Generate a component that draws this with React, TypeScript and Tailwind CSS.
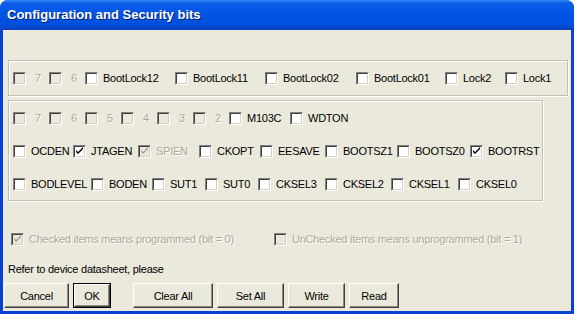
import React from "react";

type It = { t: string; w: string; c?: boolean; d?: boolean; digit?: boolean };

function Box({ c, d }: { c?: boolean; d?: boolean }) {
  return (
    <span className="relative block w-[13px] h-[13px] shrink-0 border border-t-[#808080] border-l-[#808080] border-r-white border-b-white">
      <span
        className={
          d
            ? "absolute inset-0 border border-t-[#404040] border-l-[#404040] border-r-[#d4d0c8] border-b-[#d4d0c8]"
            : "absolute inset-0 border border-t-[#404040] border-l-[#404040] border-r-[#d4d0c8] border-b-[#d4d0c8] bg-white"
        }
      >
        {c && (
          <svg width="9" height="9" viewBox="0 0 9 9" className="absolute left-0 top-0">
            <path d="M1 3 L1 5 L3 7 L8 2 L8 0 L3 5 Z" fill={d ? "#a0a0a0" : "#000"} />
          </svg>
        )}
      </span>
    </span>
  );
}

function Item({ it }: { it: It }) {
  return (
    <div className={`flex items-center h-[13px] shrink-0 ${it.w}`}>
      <Box c={it.c} d={it.d} />
      <span
        className={
          it.d
            ? it.digit
              ? "ml-[9px] text-[#aca899] [text-shadow:1px_1px_0_#fff] whitespace-nowrap leading-[13px]"
              : "ml-[5px] text-[#aca899] [text-shadow:1px_1px_0_#fff] whitespace-nowrap leading-[13px]"
            : "ml-[5px] text-black whitespace-nowrap leading-[13px]"
        }
      >
        {it.t}
      </span>
    </div>
  );
}

const row1: It[] = [
  { t: "7", w: "w-[36px]", d: true, digit: true },
  { t: "6", w: "w-[36px]", d: true, digit: true },
  { t: "BootLock12", w: "w-[90px]" },
  { t: "BootLock11", w: "w-[90px]" },
  { t: "BootLock02", w: "w-[91px]" },
  { t: "BootLock01", w: "w-[89px]" },
  { t: "Lock2", w: "w-[60px]" },
  { t: "Lock1", w: "w-auto" },
];

const row2: It[] = [
  { t: "7", w: "w-[36px]", d: true, digit: true },
  { t: "6", w: "w-[36px]", d: true, digit: true },
  { t: "5", w: "w-[36px]", d: true, digit: true },
  { t: "4", w: "w-[36px]", d: true, digit: true },
  { t: "3", w: "w-[36px]", d: true, digit: true },
  { t: "2", w: "w-[36px]", d: true, digit: true },
  { t: "M103C", w: "w-[61px]" },
  { t: "WDTON", w: "w-auto" },
];

const row3: It[] = [
  { t: "OCDEN", w: "w-[60px]" },
  { t: "JTAGEN", w: "w-[65px]", c: true },
  { t: "SPIEN", w: "w-[61px]", c: true, d: true },
  { t: "CKOPT", w: "w-[61px]" },
  { t: "EESAVE", w: "w-[65px]" },
  { t: "BOOTSZ1", w: "w-[72px]" },
  { t: "BOOTSZ0", w: "w-[73px]" },
  { t: "BOOTRST", w: "w-auto", c: true },
];

const row4: It[] = [
  { t: "BODLEVEL", w: "w-[78px]" },
  { t: "BODEN", w: "w-[61px]" },
  { t: "SUT1", w: "w-[53px]" },
  { t: "SUT0", w: "w-[53px]" },
  { t: "CKSEL3", w: "w-[67px]" },
  { t: "CKSEL2", w: "w-[66px]" },
  { t: "CKSEL1", w: "w-[67px]" },
  { t: "CKSEL0", w: "w-auto" },
];

function Row({ items }: { items: It[] }) {
  return (
    <div className="flex items-center h-[13px]">
      {items.map((it, i) => (
        <Item key={i} it={it} />
      ))}
    </div>
  );
}

function Btn({ label, w, def }: { label: string; w: string; def?: boolean }) {
  return (
    <div className={def ? `${w} h-[25px] border border-black shrink-0` : `${w} h-[25px] shrink-0`}>
      <div className="w-full h-full flex items-center justify-center pt-[1px] border border-t-white border-l-white border-r-[#404040] border-b-[#404040] shadow-[inset_-1px_-1px_0_#8c8a80] bg-[#ebe9dc] text-black text-[11px] leading-none">
        {label}
      </div>
    </div>
  );
}

export default function App() {
  return (
    <div className="w-[576px] h-[314px] bg-white font-['Liberation_Sans',Arial,sans-serif] text-[11px] tracking-[-0.25px]">
      <div className="w-[574px] h-[314px] flex flex-col rounded-t-[8px] overflow-hidden bg-[#0842d4]">
        <div className="h-[30px] shrink-0 flex items-center pl-[7px] bg-[linear-gradient(to_bottom,#2f86f8_0%,#0a5ce8_12%,#0054e4_50%,#0050dc_80%,#0a40c0_100%)]">
          <span className="text-white font-bold text-[13px] tracking-normal [text-shadow:1px_1px_0_#0a1f6e] whitespace-nowrap">
            Configuration and Security bits
          </span>
        </div>
        <div className="flex-1 mx-[3px] mb-[3px] bg-[#ebe9dc] flex flex-col">
          <div className="mt-[30px] ml-[5px] w-[560px] h-[36px] border border-[#c4c1ae] shadow-[inset_1px_1px_0_#fff,1px_1px_0_#fff] pt-[11px] pl-[4px]">
            <Row items={row1} />
          </div>
          <div className="mt-[4px] ml-[5px] w-[535px] h-[101px] border border-[#c4c1ae] shadow-[inset_1px_1px_0_#fff,1px_1px_0_#fff] pt-[11px] pl-[4px] flex flex-col gap-[20px]">
            <Row items={row2} />
            <Row items={row3} />
            <Row items={row4} />
          </div>
          <div className="mt-[32px] ml-[8px] flex items-center h-[13px]">
            <div className="flex items-center w-[263px]">
              <Box c d />
              <span className="ml-[5px] text-[#aca899] [text-shadow:1px_1px_0_#fff] whitespace-nowrap">
                Checked items means programmed (bit = 0)
              </span>
            </div>
            <div className="flex items-center">
              <Box d />
              <span className="ml-[5px] text-[#aca899] [text-shadow:1px_1px_0_#fff] whitespace-nowrap">
                UnChecked items means unprogrammed (bit = 1)
              </span>
            </div>
          </div>
          <div className="mt-[17px] ml-[5px] h-[13px] leading-[13px] text-black">
            Refer to device datasheet, please
          </div>
          <div className="mt-[7px] ml-[1px] flex items-center">
            <Btn label="Cancel" w="w-[65px]" />
            <div className="ml-[4px]">
              <Btn label="OK" w="w-[38px]" def />
            </div>
            <div className="ml-[22px]">
              <Btn label="Clear All" w="w-[80px]" />
            </div>
            <div className="ml-[4px]">
              <Btn label="Set All" w="w-[67px]" />
            </div>
            <div className="ml-[4px]">
              <Btn label="Write" w="w-[57px]" />
            </div>
            <div className="ml-[4px]">
              <Btn label="Read" w="w-[50px]" />
            </div>
          </div>
        </div>
      </div>
    </div>
  );
}
